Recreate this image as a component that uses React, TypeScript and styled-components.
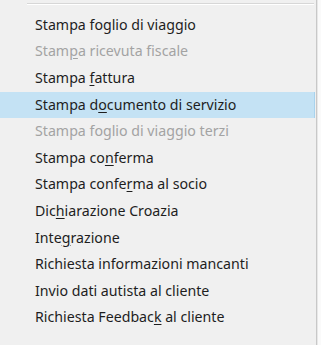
import styled, { createGlobalStyle } from "styled-components";

const GlobalStyle = createGlobalStyle`
  html, body {
    margin: 0;
    padding: 0;
    background: #f0f0f0;
  }
`;

const Page = styled.div`
  width: 321px;
  height: 345px;
  display: flex;
  background: #fafafa;
  overflow: hidden;
`;

const Menu = styled.div`
  width: 317px;
  height: 345px;
  background: #f0f0f0;
  border-right: 1px solid #c8c8c8;
  box-shadow: 1px 0 0 #e8e8e8;
  padding-top: 3px;
  box-sizing: border-box;
  font-family: "Noto Sans", "Open Sans", sans-serif;
  font-size: 14.2px;
`;

const Separator = styled.div`
  margin-left: 27px;
  margin-right: 2px;
  height: 1px;
  background: #d7d7d7;
  border-bottom: 1px solid #ffffff;
  margin-bottom: 7px;
`;

const List = styled.ul`
  list-style: none;
  margin: 0;
  padding: 0;
`;

const Item = styled.li<{ $disabled?: boolean; $active?: boolean }>`
  height: 26.6px;
  display: flex;
  align-items: center;
  padding-left: 35px;
  box-sizing: border-box;
  color: ${(p) => (p.$disabled ? "#a3a3a3" : "#1e1e1e")};
  background: ${(p) => (p.$active ? "#c4e2f4" : "transparent")};
  border-right: 1px solid ${(p) => (p.$active ? "#a8d3ee" : "transparent")};
  margin-right: 1px;
  white-space: pre;
`;

const Label = styled.span`
  padding-bottom: 2px;
`;

const Key = styled.u`
  text-underline-offset: 2px;
`;

type Entry = { pre: string; key?: string; post?: string; disabled?: boolean; active?: boolean };

const entries: Entry[] = [
  { pre: "Stampa foglio di viaggio" },
  { pre: "Stam", key: "p", post: "a ricevuta fiscale", disabled: true },
  { pre: "Stampa ", key: "f", post: "attura" },
  { pre: "Stampa d", key: "o", post: "cumento di servizio", active: true },
  { pre: "Stampa foglio di viaggio terzi", disabled: true },
  { pre: "Stampa co", key: "n", post: "ferma" },
  { pre: "Stampa confe", key: "r", post: "ma al socio" },
  { pre: "Dic", key: "h", post: "iarazione Croazia" },
  { pre: "Inte", key: "g", post: "razione" },
  { pre: "Richiesta informazioni mancanti" },
  { pre: "Invio dati autista al cliente" },
  { pre: "Richiesta Feedbac", key: "k", post: " al cliente" },
];

export default function App() {
  return (
    <Page>
      <GlobalStyle />
      <Menu>
        <Separator />
        <List>
          {entries.map((e) => (
            <Item key={e.pre + (e.post ?? "")} $disabled={e.disabled} $active={e.active}>
              <Label>
                {e.pre}
                {e.key && <Key>{e.key}</Key>}
                {e.post}
              </Label>
            </Item>
          ))}
        </List>
      </Menu>
    </Page>
  );
}
